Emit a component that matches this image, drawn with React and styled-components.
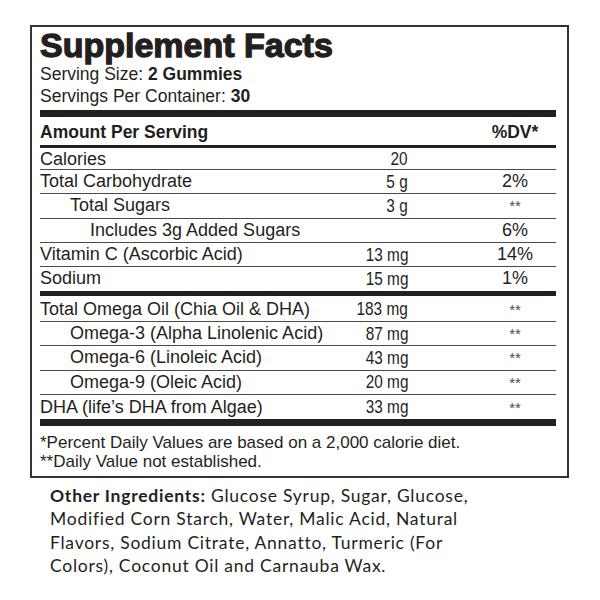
import React from "react";
import styled, { createGlobalStyle } from "styled-components";

const GlobalStyle = createGlobalStyle`
  html, body {
    margin: 0;
    padding: 0;
    background: #fff;
  }
  body {
    font-family: "Liberation Sans", Arial, sans-serif;
    color: #231f20;
  }
`;

const rows = [
  { label: "Calories", amount: "20", dv: "", h: 22 },
  { label: "Total Carbohydrate", amount: "5 g", dv: "2%" },
  { label: "Total Sugars", amount: "3 g", dv: "**", indent: 30 },
  { label: "Includes 3g Added Sugars", amount: "", dv: "6%", indent: 50 },
  { label: "Vitamin C (Ascorbic Acid)", amount: "13 mg", dv: "14%" },
  { label: "Sodium", amount: "15 mg", dv: "1%", h: 23.5, last: true },
];

const omegaRows = [
  { label: "Total Omega Oil (Chia Oil & DHA)", amount: "183 mg", dv: "**" },
  { label: "Omega-3 (Alpha Linolenic Acid)", amount: "87 mg", dv: "**", indent: 30 },
  { label: "Omega-6 (Linoleic Acid)", amount: "43 mg", dv: "**", indent: 30 },
  { label: "Omega-9 (Oleic Acid)", amount: "20 mg", dv: "**", indent: 30 },
  { label: "DHA (life’s DHA from Algae)", amount: "33 mg", dv: "**", last: true },
];

const FactRow = ({ r }) => (
  <Row $h={r.h} $last={r.last}>
    <Label $indent={r.indent}>{r.label}</Label>
    <Amount>
      <Squeeze>{r.amount}</Squeeze>
    </Amount>
    <Dv $stars={r.dv === "**"}>{r.dv}</Dv>
  </Row>
);

const App = () => {
  return (
    <Page>
      <GlobalStyle />
      <Panel>
        <Title>Supplement Facts</Title>
        <Serving>Serving Size: <b>2 Gummies</b></Serving>
        <Serving>Servings Per Container: <b>30</b></Serving>
        <Bar $h={7} $top={3} />
        <HeadRow>
          <span>Amount Per Serving</span>
          <DvHead>%DV*</DvHead>
        </HeadRow>
        <Bar $h={3} />
        {rows.map((r) => (
          <FactRow key={r.label} r={r} />
        ))}
        <Bar $h={5} />
        <Gap />
        {omegaRows.map((r) => (
          <FactRow key={r.label} r={r} />
        ))}
        <Bar $h={7} />
        <Notes>
          <div>*Percent Daily Values are based on a 2,000 calorie diet.</div>
          <div>**Daily Value not established.</div>
        </Notes>
      </Panel>
      <Ingredients>
        <Line><strong>Other Ingredients:</strong> Glucose Syrup, Sugar, Glucose,</Line>
        <Line>Modified Corn Starch, Water, Malic Acid, Natural</Line>
        <Line>Flavors, Sodium Citrate, Annatto, Turmeric (For</Line>
        <Line>Colors), Coconut Oil and Carnauba Wax.</Line>
      </Ingredients>
    </Page>
  );
};

const Page = styled.div`
  width: 600px;
  height: 600px;
  padding: 25px 0 0 30px;
  box-sizing: border-box;
`;

const Panel = styled.div`
  width: 539px;
  box-sizing: border-box;
  border: 2px solid #333;
  padding: 0 11px 5px 8px;
`;

const Title = styled.h1`
  margin: 0;
  font-size: 34px;
  line-height: 36px;
  font-weight: 700;
  -webkit-text-stroke: 1.3px #231f20;
`;

const Serving = styled.div`
  font-size: 17.5px;
  line-height: 22px;
  b {
    font-weight: 700;
  }
`;

const Bar = styled.div`
  height: ${(p) => p.$h}px;
  background: #231f20;
  margin-top: ${(p) => p.$top || 0}px;
`;

const HeadRow = styled.div`
  display: flex;
  justify-content: space-between;
  height: 28px;
  box-sizing: border-box;
  padding-top: 3px;
  line-height: 25px;
  font-size: 17.5px;
  font-weight: 700;
`;

const DvHead = styled.span`
  width: 82px;
  padding-left: 18px;
  text-align: center;
`;

const Row = styled.div`
  display: grid;
  grid-template-columns: 1fr 80px 148px;
  align-items: center;
  box-sizing: border-box;
  height: ${(p) => p.$h || 24.3}px;
  font-size: 18px;
  border-bottom: ${(p) => (p.$last ? "none" : "1px solid #4a4a4a")};
`;

const Label = styled.span`
  padding-left: ${(p) => p.$indent || 0}px;
  white-space: nowrap;
`;

const Amount = styled.span`
  text-align: right;
`;

const Squeeze = styled.span`
  display: inline-block;
  font-size: 18.5px;
  transform: scaleX(0.83);
  transform-origin: right center;
  white-space: nowrap;
`;

const Dv = styled.span`
  padding-left: 66px;
  text-align: center;
  font-size: ${(p) => (p.$stars ? "15px" : "18px")};
  color: ${(p) => (p.$stars ? "#4a4a4a" : "#231f20")};
`;

const Gap = styled.div`
  height: 2px;
`;

const Notes = styled.div`
  margin-top: 7px;
  font-size: 17px;
  line-height: 19px;
`;

const Ingredients = styled.div`
  margin: 6px 0 0 20px;
  font-family: Lato, "Liberation Sans", sans-serif;
  font-size: 17.5px;
  line-height: 23.3px;
  letter-spacing: 0.75px;
  color: #231f20;
  strong {
    font-weight: 700;
  }
`;

const Line = styled.div`
  white-space: nowrap;
`;

export default App;
